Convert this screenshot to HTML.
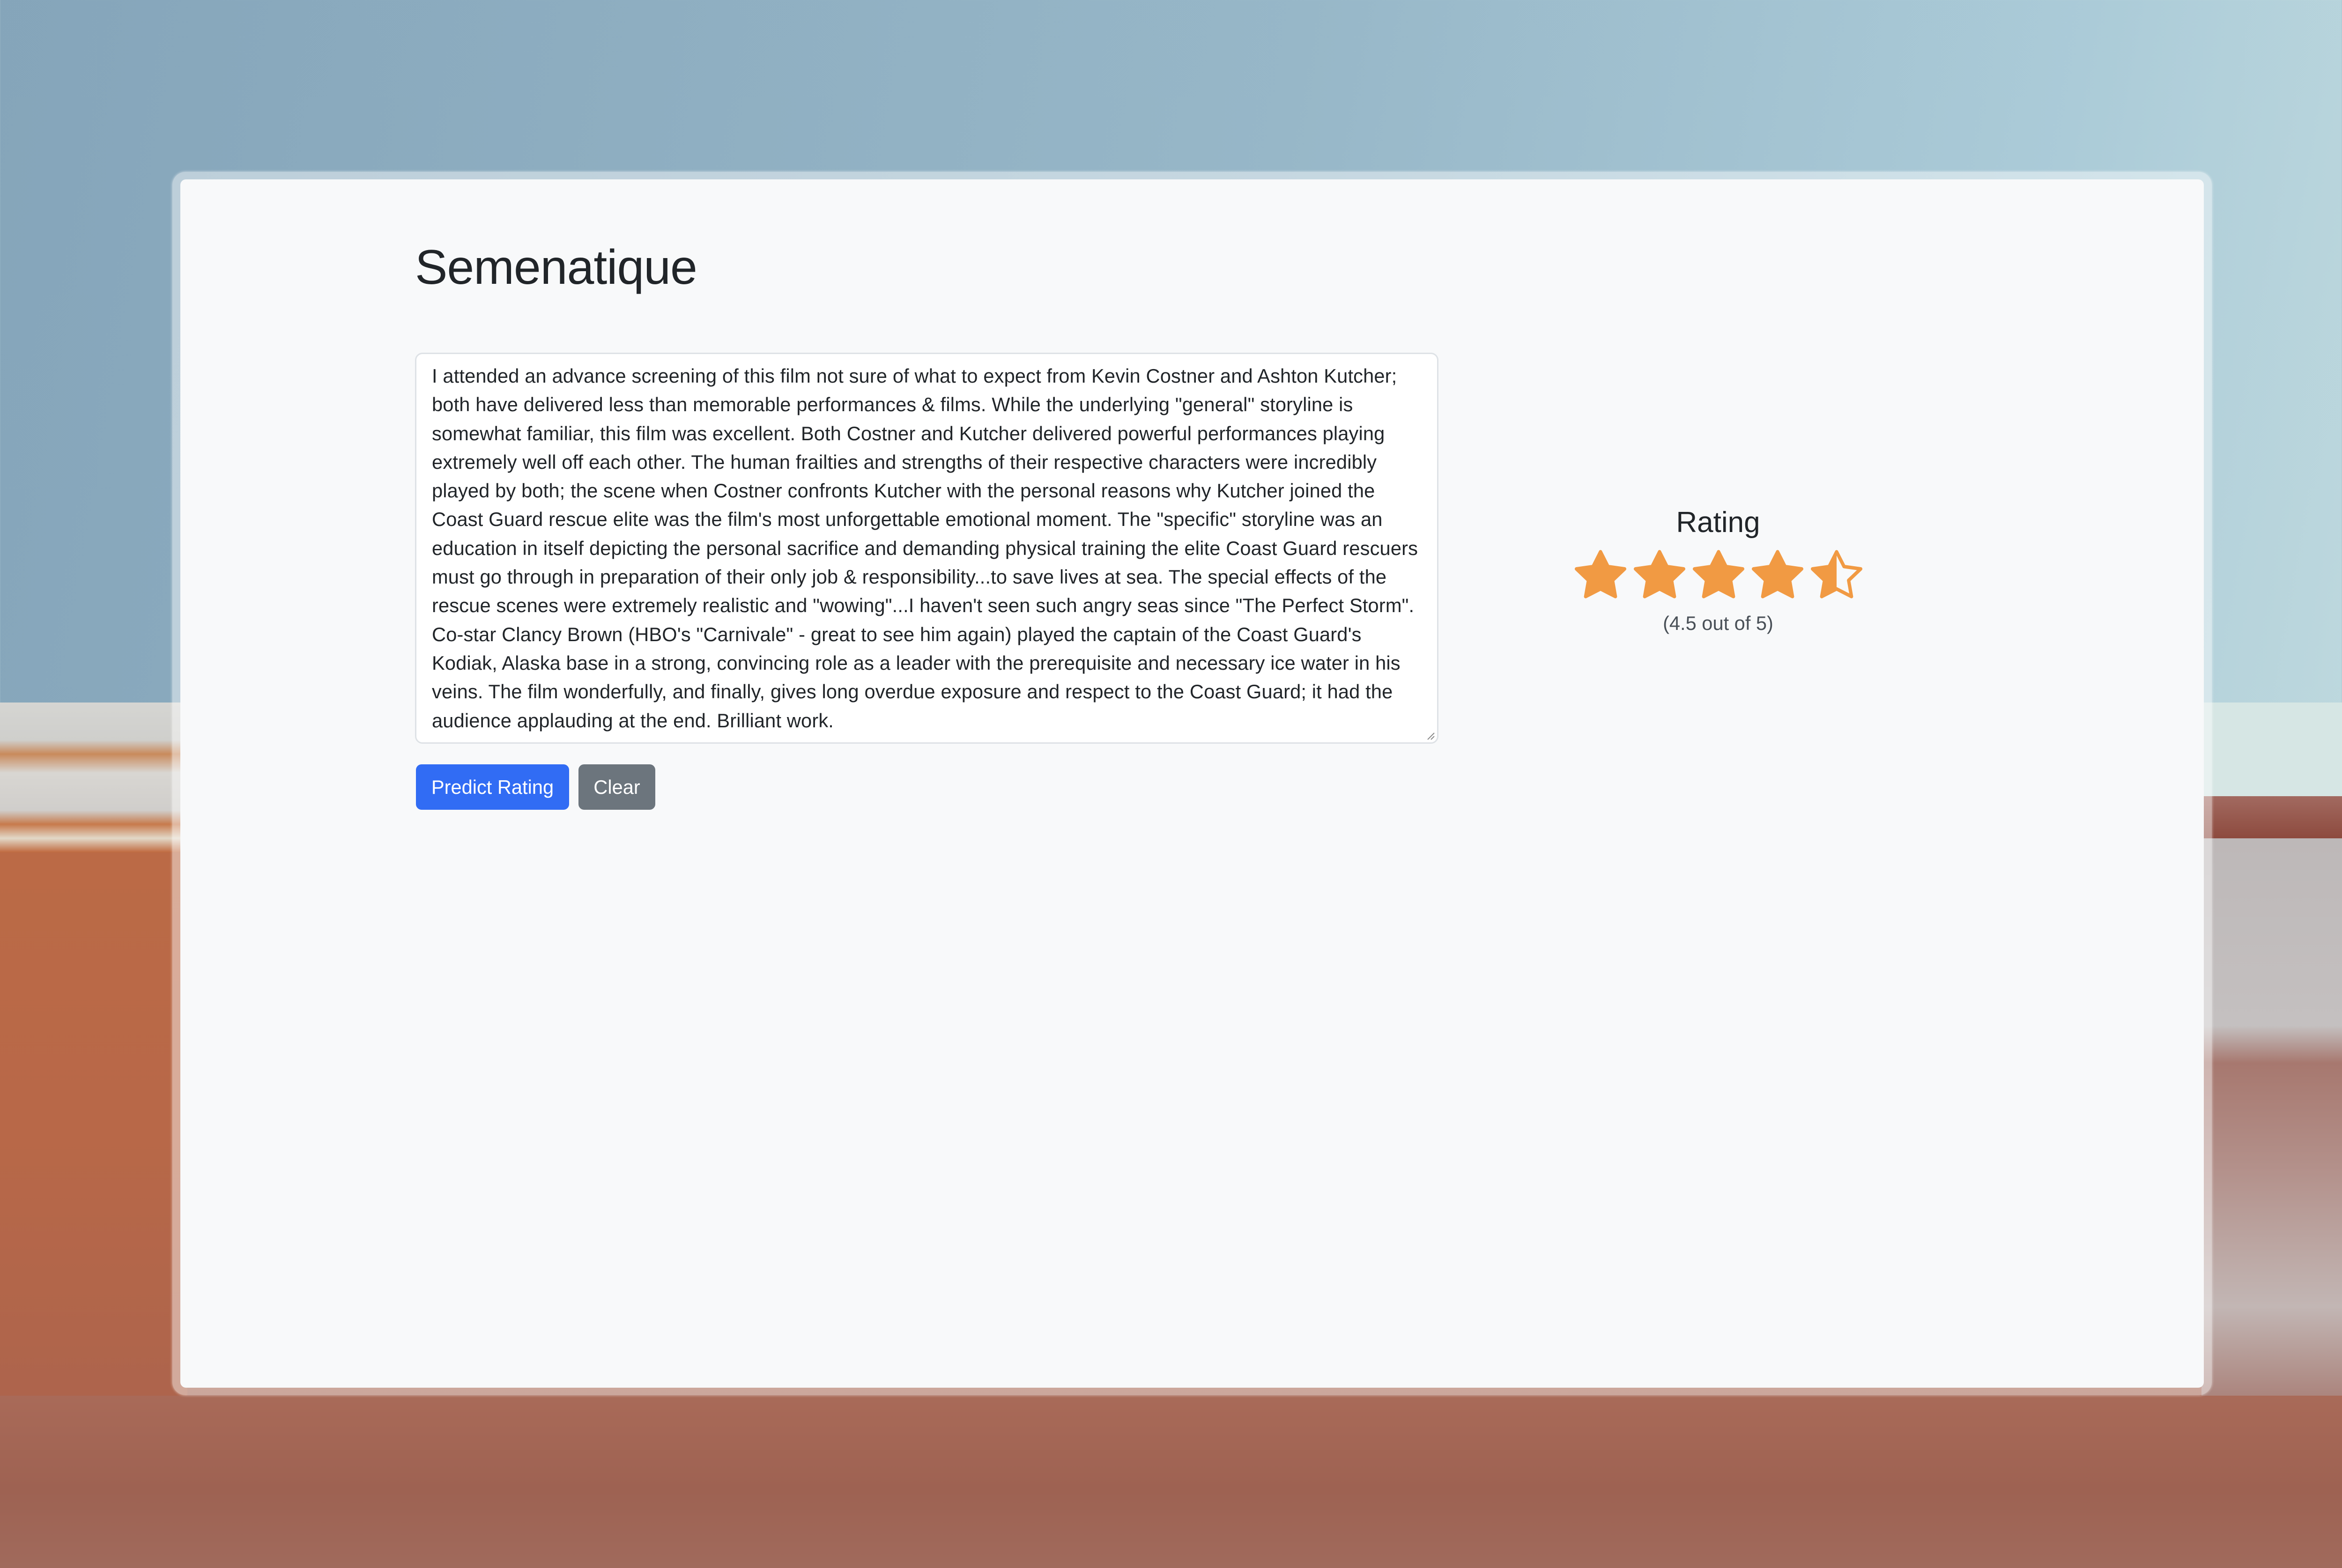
<!DOCTYPE html>
<html><head><meta charset="utf-8">
<style>
html,body{margin:0;padding:0;}
body{width:5088px;height:3348px;position:relative;overflow:hidden;font-family:"Liberation Sans",Arial,sans-serif;
background:linear-gradient(100deg,#85a5ba 0%,#97b7c8 50%,#abcbd8 80%,#c4dde0 100%);}
.bg{position:absolute;}
.frame{position:absolute;left:368px;top:367px;width:4354px;height:2612px;border-radius:28px;background:rgba(255,255,255,0.45);box-shadow:0 0 6px rgba(255,255,255,0.6);}
.panel{position:absolute;left:385px;top:383px;width:4320px;height:2580px;border-radius:12px;background:#f8f9fa;}
h1{position:absolute;left:886px;top:519px;margin:0;font-size:104px;line-height:1;font-weight:400;color:#212529;letter-spacing:-1px;}
.ta{position:absolute;left:886px;top:753px;width:2185px;height:835px;box-sizing:border-box;border:3px solid #dee2e6;border-radius:16px;background:#fff;padding:16px 0 0 33px;}
.ta div{white-space:nowrap;font-size:41.6px;line-height:61.3px;color:#212529;letter-spacing:0.15px;}
.grip{position:absolute;right:4px;bottom:4px;width:20px;height:20px;}
.btn{position:absolute;top:1632px;height:97px;border-radius:12px;color:#fff;font-size:41.6px;line-height:97px;text-align:center;}
.b1{left:888px;width:327px;background:#316cf4;}
.b2{left:1235px;width:164px;background:#6c757d;}
.rt{position:absolute;left:3268px;width:800px;text-align:center;}
.stars{position:absolute;left:3362px;top:1171px;height:110px;}
.stars svg{width:110px;height:110px;margin-right:16px;float:left;fill:#f19a43;}
</style></head><body>
<!-- ground -->
<div class="bg" style="left:0;top:1500px;width:5088px;height:1848px;background:linear-gradient(180deg,#b36a50 0,#a8624d 1000px,#9c5c4c 1848px);"></div>
<!-- left rocks -->
<div class="bg" style="left:0;top:1500px;width:400px;height:320px;background:linear-gradient(180deg,#d5d5d2 0,#cfcfcc 80px,#c98a5c 110px,#d8d6d2 150px,#d0cecb 230px,#c77a4c 260px,#e2d8c8 290px,#c06a40 320px);"></div>
<div class="bg" style="left:0;top:1820px;width:400px;height:1180px;background:linear-gradient(180deg,#bb6a46 0,#b86848 600px,#ad644c 1180px);"></div>
<!-- right rocks -->
<div class="bg" style="left:4700px;top:1500px;width:388px;height:224px;background:#d6e6e4;"></div>
<div class="bg" style="left:4700px;top:1700px;width:388px;height:90px;background:linear-gradient(180deg,#a26a60,#8d4a3e);"></div>
<div class="bg" style="left:4700px;top:1790px;width:388px;height:1210px;background:linear-gradient(180deg,#bdb8b8 0,#c4c0c0 400px,#a7786f 480px,#b3908a 700px,#c2b6b4 1000px,#a98078 1210px);"></div>
<!-- bottom under frame -->
<div class="bg" style="left:0;top:2980px;width:5088px;height:368px;background:linear-gradient(180deg,#a96a58 0,#9e6252 200px,#a06a5c 368px);"></div>
<div class="frame"></div>
<div class="panel"></div>
<h1>Semenatique</h1>
<div class="ta">
<div>I attended an advance screening of this film not sure of what to expect from Kevin Costner and Ashton Kutcher;</div>
<div>both have delivered less than memorable performances &amp; films. While the underlying "general" storyline is</div>
<div>somewhat familiar, this film was excellent. Both Costner and Kutcher delivered powerful performances playing</div>
<div>extremely well off each other. The human frailties and strengths of their respective characters were incredibly</div>
<div>played by both; the scene when Costner confronts Kutcher with the personal reasons why Kutcher joined the</div>
<div>Coast Guard rescue elite was the film's most unforgettable emotional moment. The "specific" storyline was an</div>
<div>education in itself depicting the personal sacrifice and demanding physical training the elite Coast Guard rescuers</div>
<div>must go through in preparation of their only job &amp; responsibility...to save lives at sea. The special effects of the</div>
<div>rescue scenes were extremely realistic and "wowing"...I haven't seen such angry seas since "The Perfect Storm".</div>
<div>Co-star Clancy Brown (HBO's "Carnivale" - great to see him again) played the captain of the Coast Guard's</div>
<div>Kodiak, Alaska base in a strong, convincing role as a leader with the prerequisite and necessary ice water in his</div>
<div>veins. The film wonderfully, and finally, gives long overdue exposure and respect to the Coast Guard; it had the</div>
<div>audience applauding at the end. Brilliant work.</div>
<svg class="grip" viewBox="0 0 20 20"><path d="M4 18 L18 4 M11 18 L18 11" stroke="#888" stroke-width="2"/></svg>
</div>
<div class="btn b1">Predict Rating</div>
<div class="btn b2">Clear</div>
<div class="rt" style="top:1085px;font-size:62px;line-height:1;font-weight:400;color:#212529;">Rating</div>
<div class="stars">
<svg viewBox="0 0 16 16"><path d="M3.612 15.443c-.386.198-.824-.149-.746-.592l.83-4.730L.173 6.765c-.329-.314-.158-.888.283-.95l4.898-.696L7.538.792c.197-.39.73-.39.927 0l2.184 4.327 4.898.696c.441.062.612.636.282.95l-3.522 3.356.83 4.73c.078.443-.36.79-.746.592L8 13.187l-4.389 2.256z"/></svg>
<svg viewBox="0 0 16 16"><path d="M3.612 15.443c-.386.198-.824-.149-.746-.592l.83-4.730L.173 6.765c-.329-.314-.158-.888.283-.95l4.898-.696L7.538.792c.197-.39.73-.39.927 0l2.184 4.327 4.898.696c.441.062.612.636.282.95l-3.522 3.356.83 4.73c.078.443-.36.79-.746.592L8 13.187l-4.389 2.256z"/></svg>
<svg viewBox="0 0 16 16"><path d="M3.612 15.443c-.386.198-.824-.149-.746-.592l.83-4.730L.173 6.765c-.329-.314-.158-.888.283-.95l4.898-.696L7.538.792c.197-.39.73-.39.927 0l2.184 4.327 4.898.696c.441.062.612.636.282.95l-3.522 3.356.83 4.73c.078.443-.36.79-.746.592L8 13.187l-4.389 2.256z"/></svg>
<svg viewBox="0 0 16 16"><path d="M3.612 15.443c-.386.198-.824-.149-.746-.592l.83-4.730L.173 6.765c-.329-.314-.158-.888.283-.95l4.898-.696L7.538.792c.197-.39.73-.39.927 0l2.184 4.327 4.898.696c.441.062.612.636.282.95l-3.522 3.356.83 4.73c.078.443-.36.79-.746.592L8 13.187l-4.389 2.256z"/></svg>
<svg viewBox="0 0 16 16"><path d="M5.354 5.119 7.538.792A.52.52 0 0 1 8 .5c.183 0 .366.097.465.292l2.184 4.327 4.898.696A.54.54 0 0 1 16 6.32a.55.55 0 0 1-.17.445l-3.523 3.356.83 4.73c.078.443-.36.79-.746.592L8 13.187l-4.389 2.256a.5.5 0 0 1-.146.05c-.342.06-.668-.254-.6-.642l.83-4.73L.173 6.765a.55.55 0 0 1-.172-.403.6.6 0 0 1 .085-.302.51.51 0 0 1 .37-.245zM8 12.027a.5.5 0 0 1 .232.056l3.686 1.894-.694-3.957a.56.56 0 0 1 .162-.505l2.907-2.77-4.052-.576a.53.53 0 0 1-.393-.288L8.001 2.223 8 2.226z"/></svg>
</div>
<div class="rt" style="top:1310px;font-size:41.6px;line-height:1;color:#495057;">(4.5 out of 5)</div>
</body></html>
